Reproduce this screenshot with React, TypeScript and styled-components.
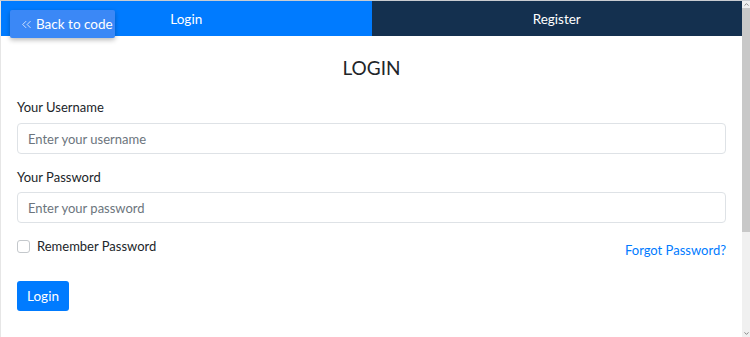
import React from "react";
import styled, { createGlobalStyle } from "styled-components";
import { ChevronsLeft, ChevronUp, ChevronDown } from "lucide-react";

const Global = createGlobalStyle`
  html, body { margin: 0; padding: 0; overflow: hidden; background: #fff; }
  body { font-family: Lato, "Noto Sans", sans-serif; color: #212529; }
  * { box-sizing: border-box; }
`;

const Frame = styled.div`
  display: flex;
  height: 337px;
  width: 750px;
  border-top: 1px solid #c9ccd1;
  overflow: hidden;
`;

const Page = styled.div`
  position: relative;
  flex: 1;
  border-left: 1px solid #e6e6e6;
`;

const ScrollTrack = styled.div`
  width: 8px;
  display: flex;
  flex-direction: column;
  align-items: center;
  background: #f0f0f0;
  color: #7a7a7a;
`;

const ScrollThumb = styled.div`
  width: 8px;
  height: 224px;
  background: #c8c8c8;
`;

const ScrollSpacer = styled.div`
  flex: 1;
`;

const Tabs = styled.div`
  display: grid;
  grid-template-columns: 1fr 1fr;
  height: 35px;
`;

const Tab = styled.div<{ $active?: boolean }>`
  display: flex;
  align-items: center;
  justify-content: center;
  background: ${(p) => (p.$active ? "#007bff" : "#14304f")};
  color: #fff;
  font-size: 13.5px;
`;

const BackButton = styled.button`
  position: absolute;
  top: 9px;
  left: 9px;
  width: 105px;
  height: 28px;
  display: flex;
  align-items: center;
  gap: 2px;
  padding: 0 0 0 9px;
  border: none;
  border-radius: 2px;
  background: #3b88f6;
  color: #fff;
  font-family: inherit;
  font-size: 13.5px;
  white-space: nowrap;
  box-shadow: 0 2px 5px rgba(0, 0, 0, 0.28);
  cursor: pointer;
`;

const Form = styled.form`
  display: flex;
  flex-direction: column;
  padding: 0 16px;
`;

const Heading = styled.h2`
  margin: 20px 0 17px;
  text-align: center;
  font-weight: 400;
  font-size: 19px;
  line-height: 24px;
  color: #212529;
`;

const Label = styled.label<{ $gap?: number }>`
  font-size: 13px;
  line-height: 21px;
  margin-bottom: ${(p) => p.$gap ?? 5}px;
  color: #212529;
`;

const Input = styled.input`
  height: 31px;
  border: 1px solid #dee2e6;
  border-radius: 4px;
  padding: 0 10px;
  font-family: inherit;
  font-size: 13px;
  color: #495057;
  margin-bottom: 13px;
  &::placeholder { color: #6c757d; }
`;

const OptionsRow = styled.div`
  display: flex;
  justify-content: space-between;
  align-items: flex-end;
`;

const CheckLabel = styled.label`
  display: flex;
  align-items: center;
  gap: 7px;
  font-size: 13px;
  line-height: 21px;
`;

const Box = styled.span`
  width: 13px;
  height: 13px;
  border: 1px solid #c4c8cc;
  border-radius: 3px;
  background: #fff;
`;

const Link = styled.a`
  color: #007bff;
  font-size: 13px;
  line-height: 21px;
  text-decoration: none;
  margin-bottom: -4px;
`;

const Submit = styled.button`
  align-self: flex-start;
  margin-top: 24px;
  height: 30px;
  width: 52px;
  padding: 0;
  border: none;
  border-radius: 3px;
  background: #007bff;
  color: #fff;
  font-family: inherit;
  font-size: 13.5px;
`;

export default function App() {
  return (
    <>
      <Global />
      <Frame>
        <Page>
          <Tabs>
            <Tab $active>Login</Tab>
            <Tab>Register</Tab>
          </Tabs>
          <BackButton type="button">
            <ChevronsLeft size={15} strokeWidth={1.2} />
            Back to code
          </BackButton>
          <Form onSubmit={(e) => e.preventDefault()}>
            <Heading>LOGIN</Heading>
            <Label>Your Username</Label>
            <Input placeholder="Enter your username" />
            <Label $gap={4}>Your Password</Label>
            <Input type="password" placeholder="Enter your password" />
            <OptionsRow>
              <CheckLabel>
                <Box />
                Remember Password
              </CheckLabel>
              <Link href="#">Forgot Password?</Link>
            </OptionsRow>
            <Submit type="submit">Login</Submit>
          </Form>
        </Page>
        <ScrollTrack>
          <ChevronUp size={7} strokeWidth={3} />
          <ScrollThumb />
          <ScrollSpacer />
          <ChevronDown size={7} strokeWidth={3} />
        </ScrollTrack>
      </Frame>
    </>
  );
}
